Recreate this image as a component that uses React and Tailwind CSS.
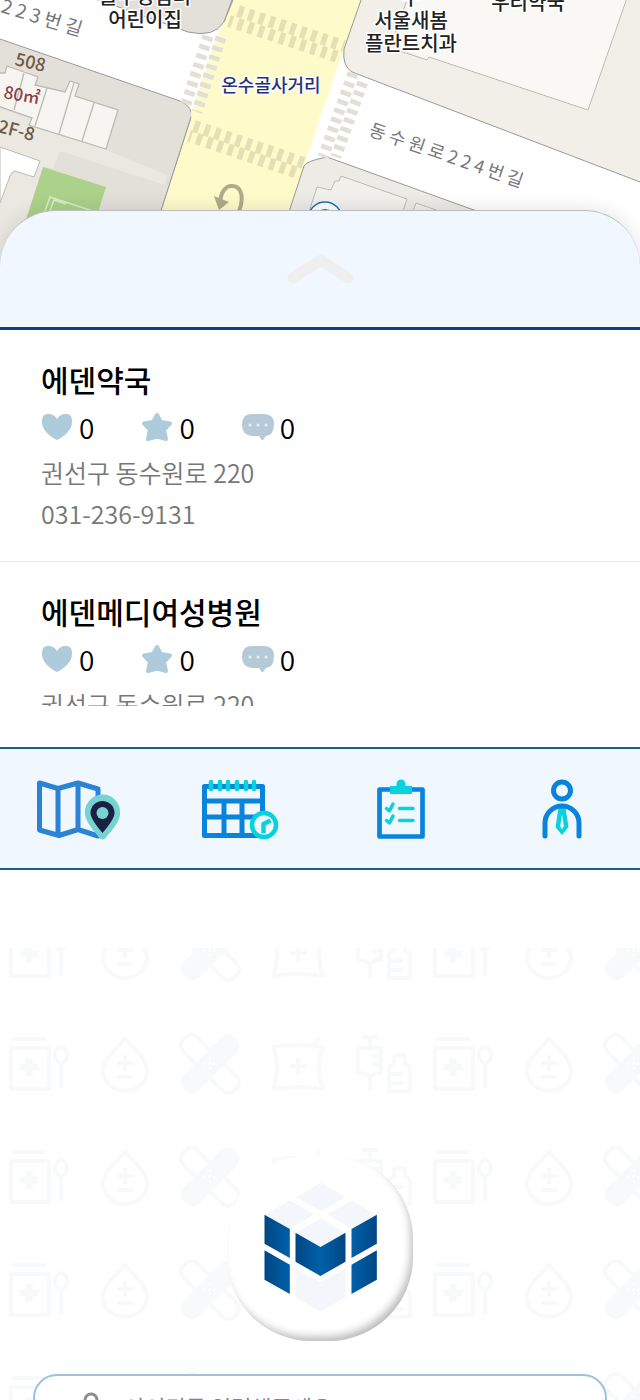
import React from "react";

function MapView() {
  const halo = { paintOrder: "stroke", stroke: "#ffffff", strokeWidth: 3, strokeLinejoin: "round" };
  return (
    <svg
      className="block h-[270px] w-full"
      viewBox="0 0 640 270"
      preserveAspectRatio="xMidYMin slice"
      role="img"
      aria-label="지도"
      fontFamily="'Noto Sans CJK KR', sans-serif"
    >
      <rect width="640" height="270" fill="#ffffff" />
      {/* western block */}
      <path d="M0 39 L180 101 Q194 107 191 119 L142 270 H0Z" fill="#e3e0d9" />
      <path d="M0 108 L46 125 L167 175 L165 185 L60 151 L53 168 L43 167 L27 215 L0 270Z" fill="#ebe8e1" />
      <path d="M0 39 L180 101 Q194 107 191 119 L142 270" fill="none" stroke="#999999" />
      <path d="M0 147 L40 161 L34 177 L15 171 Q11 172 10 176 L0 203Z" fill="#ffffff" stroke="#bdbab2" />
      <path d="M43 167 L106 187 L80 270 H10Z" fill="#acd18a" />
      <path d="M24 270 L50 197 L105 215 M28 270 L54 200 L66 204" fill="none" stroke="#d8ebc5" strokeWidth="1.5" />
      <path
        d="M-2 73 L5 73 L7 66 L24 72 L38 77 L35 85 L65 92 L70 81 L79 84 L75 96 L118 110 L106 149 L29 125 L32 118 L-2 106Z"
        fill="#f6f5f2"
        stroke="#bdbab2"
        strokeWidth="1.3"
      />
      <path d="M24 73 L14 110 M47 88 L35 126 M74 83 L59 134 M94 103 L82 141" stroke="#bdbab2" strokeWidth="1.3" />
      {/* kindergarten block */}
      <path d="M95 0 L118 7 L188 32 Q214 38 224 22 L233 0Z" fill="#e3e0d9" />
      <path d="M113 5 L188 32 Q214 38 224 22 L232 0" fill="none" stroke="#999999" />
      {/* main road */}
      <path d="M233 0 H361 L343 52 L320 117 L270 270 H142 L191 119 V113 L218 34 L224 22Z" fill="#fffaca" />
      <path d="M233 0 L224 22 M191 117 L142 270" stroke="#999999" />
      <g fill="none" stroke="#e5dfb6" strokeWidth="12" strokeDasharray="5.5 5.5">
        <path d="M238 11 L344 46" />
        <path d="M229 21 L338 57" strokeDashoffset="2" />
        <path d="M194 126 L304 163" />
        <path d="M189 136 L301 174" strokeDashoffset="3" />
      </g>
      {/* eastern block */}
      <path d="M361 0 L344 49 Q342 66 352 72 L640 182 V0Z" fill="#f2efe8" />
      <path d="M361 0 L344 49 Q342 66 352 72 L640 182" fill="none" stroke="#999999" />
      <path d="M410 -10 L396 46 L427 60 L429 57 L588 110 L630 -10Z" fill="#f9f8f5" />
      <path d="M407 0 L395 34 M400 51 L427 60 L429 57 L588 110 L627 -2" fill="none" stroke="#bdbab2" />
      {/* southern block */}
      <path d="M270 270 L304 166 Q306 161 327 157 L640 270Z" fill="#edebe6" />
      <path d="M270 270 L304 166 Q306 161 327 157 L640 270" fill="none" stroke="#999999" />
      <path
        d="M300 240 L317 187 L331 190 L335 181 L339 181 L341 176 L407 199 L397 230Z M408 225 L416 203 L470 222"
        fill="#f2f0ec"
        stroke="#bdbab2"
      />
      <g fill="none" stroke="#e2dfd6" strokeWidth="11" strokeDasharray="4.8 4.8">
        <path d="M208 36 L186 104" />
        <path d="M222 34 L197 112" strokeDashoffset="6" />
        <path d="M353 73 L323 157" />
        <path d="M364 79 L336 157" strokeDashoffset="6" />
      </g>
      <path d="M238 214 C244 200 243 187 233 186 C225 185 221 193 220 202" fill="none" stroke="#b0ab8b" strokeWidth="4" />
      <path d="M214 196 L229 202 L219 210Z" fill="#b0ab8b" />
      <circle cx="325" cy="219" r="17" fill="#ffffff" stroke="#1973b3" strokeWidth="1.5" />
      <circle cx="325" cy="219" r="10" fill="#1973b3" />
      <g fontSize="18" fontWeight="500" fill="#222222" textAnchor="middle">
        <text fontSize="20" style={halo}>
          <tspan x="145" y="4">을수정림터</tspan>
          <tspan x="145" y="27">어린이집</tspan>
        </text>
        <text fontSize="20" style={halo}>
          <tspan x="411" y="5">수</tspan>
          <tspan x="411" y="28">서울새봄</tspan>
          <tspan x="411" y="51">플란트치과</tspan>
        </text>
        <text x="528" y="10" fontSize="20" style={halo}>우리약국</text>
        <text x="271" y="92" fill="#26317e" style={halo}>온수골사거리</text>
      </g>
      <g fontSize="18" fill="#77777a">
        <text transform="translate(0 12) rotate(17)" fontSize="19">2 2 3 번 길</text>
        <text transform="translate(368 135) rotate(19)">동 수 원 로 2 2 4 번 길</text>
      </g>
      <g fill="#6e5a48" fontWeight="500">
        <text transform="translate(14 65) rotate(13)" fontSize="18">508</text>
        <text transform="translate(-3 132) rotate(14)" fontSize="18">2F-8</text>
        <text transform="translate(3 98) rotate(10)" fontSize="17" fill="#8a3f45">80㎡</text>
      </g>
    </svg>
  );
}

const HeartIcon = () => (
  <svg className="h-8 w-8" viewBox="0 0 32 32" aria-hidden="true">
    <path d="M16 29 C10 26 1 20 1 11 C1 5 3 3 7 3 C12 3 14 5 16 8 C18 5 20 3 25 3 C29 3 31 5 31 11 C31 20 22 26 16 29Z" fill="#aecbdb" />
  </svg>
);

const StarIcon = () => (
  <svg className="h-8 w-8" viewBox="0 0 32 32" aria-hidden="true">
    <path
      d="M16 4 L20 11 L29 12.500 L23 19 L25 28 L16 25.500 L7 28 L9 19 L3 12.500 L12 11Z"
      fill="#aecbdb"
      stroke="#aecbdb"
      strokeWidth="4"
      strokeLinejoin="round"
    />
  </svg>
);

const CommentIcon = () => (
  <svg className="h-8 w-8" viewBox="0 0 32 32" aria-hidden="true">
    <path d="M10 3 H22 Q32 3 32 13 Q32 24 24 25 L21 29 Q20 30 19 28 L17 25 H10 Q0 24 0 14 Q0 3 10 3Z" fill="#b5cad6" />
    <g fill="#e6f1f6">
      <circle cx="8" cy="14" r="1.500" />
      <circle cx="16" cy="14" r="1.500" />
      <circle cx="24" cy="14" r="1.500" />
    </g>
  </svg>
);

function Stat({ label, icon, value }) {
  return (
    <li className="flex items-center gap-1.5" aria-label={label}>
      {icon}
      <span className="text-[28px] leading-[50px] font-[350]">{value}</span>
    </li>
  );
}

function Place({ name, address, phone }) {
  return (
    <li className="border-b border-[#e8e8e8] px-[41px] pt-[27px] pb-[27px]">
      <h2 className="text-[30px] leading-[45px] font-medium">{name}</h2>
      <ul className="flex gap-[47px]">
        <Stat label="좋아요" icon={<HeartIcon />} value={0} />
        <Stat label="별점" icon={<StarIcon />} value={0} />
        <Stat label="댓글" icon={<CommentIcon />} value={0} />
      </ul>
      <p className="text-[25px] leading-[41px] font-[350] text-[#777777]">{address}</p>
      <p className="text-[25px] leading-[41px] font-[350] text-[#777777]">{phone}</p>
    </li>
  );
}

const MapIcon = () => (
  <svg className="h-[64px] w-[84px]" viewBox="4 0 84 64" aria-hidden="true">
    <path
      d="M6.500 5 L25 10.500 L45 5 L65 11 V58 L45 51.500 L26 57.500 L6.500 52Z M25 10.500 V57 M45 5 V52"
      fill="none"
      stroke="#2b83d6"
      strokeWidth="5"
      strokeLinejoin="round"
    />
    <path d="M69.500 61.500 Q67 61.500 65 58 Q51 42 52 34 A17.500 17.500 0 0 1 87 34 Q88 43 74 58 Q72 61.500 69.500 61.500Z" fill="#77d2d2" />
    <path d="M69.500 55 Q57.500 41 57.500 35 A12 12 0 0 1 81.500 35 Q81.500 41 69.500 55Z" fill="#1b2142" />
    <circle cx="69.500" cy="35" r="6" fill="#77d2d2" />
  </svg>
);

const CalendarIcon = () => (
  <svg className="h-[64px] w-[78px]" viewBox="0 0 78 64" aria-hidden="true">
    <path
      d="M3.500 8.500 H61.500 V57.500 H3.500Z M3.500 23 H61 M3.500 39 H61 M23 23 V57 M41 23 V57"
      fill="none"
      stroke="#0984dc"
      strokeWidth="5"
      strokeLinejoin="round"
    />
    <path d="M10 4 V11 M19 4 V11 M27 4 V11 M36 4 V11 M45 4 V11 M53 4 V11" stroke="#08d2dc" strokeWidth="4.500" strokeLinecap="round" />
    <circle cx="63" cy="47" r="12" fill="#f0f7ff" stroke="#08d2dc" strokeWidth="4.500" />
    <path d="M62.500 53 V46 L67.500 43.500" fill="none" stroke="#08d2dc" strokeWidth="4.500" strokeLinecap="square" strokeLinejoin="round" />
  </svg>
);

const ChecklistIcon = () => (
  <svg className="h-[64px] w-[50px]" viewBox="0 0 50 64" aria-hidden="true">
    <rect x="3.500" y="11.500" width="43" height="47" fill="none" stroke="#0984dc" strokeWidth="4.700" strokeLinejoin="round" />
    <path d="M14 8 H20.500 V6 A4.500 4.500 0 0 1 29.500 6 V8 H36 V16 H14Z" fill="#08d2dc" />
    <path
      d="M10.500 30.500 L13.500 33 L17 26 M10.500 42.500 L13.500 45 L17 38 M23.500 30.500 H37 M23.500 42.500 H37"
      fill="none"
      stroke="#08d2dc"
      strokeWidth="3.500"
      strokeLinecap="round"
      strokeLinejoin="round"
    />
  </svg>
);

const ProfileIcon = () => (
  <svg className="h-[64px] w-[42px]" viewBox="0 0 42 64" aria-hidden="true">
    <circle cx="21" cy="12.500" r="8.500" fill="none" stroke="#0984dc" strokeWidth="5" />
    <path d="M17.500 30 H24.500 L27.500 49 L21 57 L14.500 49Z" fill="#08d2dc" />
    <path d="M21 36 L22.800 48 L21 51.500 L19.200 48Z" fill="#f0f7ff" />
    <path d="M4 58 V45 A17 17 0 0 1 38 45 V58" fill="none" stroke="#0984dc" strokeWidth="5" strokeLinecap="round" />
  </svg>
);

const tabs = [
  { label: "지도", Icon: MapIcon },
  { label: "일정", Icon: CalendarIcon },
  { label: "체크리스트", Icon: ChecklistIcon },
  { label: "내 정보", Icon: ProfileIcon },
];

function MedicalPattern() {
  return (
    <svg className="absolute inset-0 h-full w-full" aria-hidden="true">
      <defs>
        <pattern id="medical" width="424" height="113" y="81" patternUnits="userSpaceOnUse">
          <g fill="none" stroke="#f7f9fb" strokeWidth="4" strokeLinejoin="round">
            <path d="M12 10 H46 M11 19 H49 V60 H11Z M61 35 V59" />
            <path d="M29 29 V47 M20 38 H38" strokeWidth="7" />
            <ellipse cx="61" cy="26" rx="6" ry="8" />
            <path d="M125 9 C118 20 103 28 103 42 A22 20 0 0 0 147 42 C147 28 132 20 125 9Z M125 26 V42 M117 34 H133 M117 48 H133" />
            <rect x="174" y="25" width="72" height="20" rx="8" transform="rotate(45 210 35)" />
            <path d="M273 18 Q298 14 323 18 Q315 38 323 60 Q298 56 273 60 Q281 38 273 18Z M298 28 V46 M289 37 H307 M314 16 L320 9" />
            <path d="M358 19 H381 V44 H376 L370 48 L363 44 H358Z M370 48 V62 M370 19 V8 M362 8 H378 M372 27 H380 M372 35 H380" />
            <path d="M394 26 H405 M394 26 V34 L389 38 V62 H410 V38 L405 34 V26 M389 45 H403 M389 54 H403" />
          </g>
          <rect x="174" y="24" width="72" height="22" rx="9" transform="rotate(-45 210 35)" fill="#f7f9fb" />
          <path d="M203 35 H217 M210 28 V42" stroke="#ffffff" strokeWidth="2" strokeDasharray="2 3" />
        </pattern>
      </defs>
      <rect width="100%" height="100%" fill="url(#medical)" />
    </svg>
  );
}

function Logo() {
  return (
    <svg className="h-full w-full" viewBox="84 75 555 558" role="img" aria-label="로고">
      <defs>
        <linearGradient id="side">
          <stop offset="0" stopColor="#004783" />
          <stop offset="1" stopColor="#0060aa" />
        </linearGradient>
        <linearGradient id="sideFlip">
          <stop offset="0" stopColor="#0060aa" />
          <stop offset="1" stopColor="#004783" />
        </linearGradient>
        <linearGradient id="front">
          <stop offset="0" stopColor="#004783" />
          <stop offset="0.5" stopColor="#0060aa" />
          <stop offset="1" stopColor="#004783" />
        </linearGradient>
      </defs>
      <g fill="#f3f7fb">
        <path d="M364 158 L438 201 L364 244 L290 201Z" />
        <path d="M270 211 L344 253 L270 298 L197 255Z" />
        <path d="M457 211 L530 254 L457 296 L383 253Z" />
        <path d="M363 265 L437 308 L363 351 L289 308Z" />
        <path d="M288 416 L363 457 L438 416 V502 L363 545 L288 502Z" />
      </g>
      <path d="M195 254 L271 297 V384 L195 341Z M195 361 L271 404 V492 L195 449Z" fill="url(#side)" />
      <path d="M532 254 L456 297 V384 L532 341Z M532 361 L456 404 V492 L532 449Z" fill="url(#sideFlip)" />
      <path d="M288 308 L363 351 L438 308 V395 L363 438 L288 395Z" fill="url(#front)" />
    </svg>
  );
}

export default function App() {
  return (
    <main className="flex h-screen flex-col overflow-hidden bg-white font-['Noto_Sans_CJK_KR',sans-serif] text-black">
      <section className="shrink-0">
        <MapView />
        <div className="relative -mt-[60px] flex h-[120px] items-center justify-center rounded-t-[56px] border-t border-b-3 border-t-[#bcbcbc] border-b-[#00478a] bg-[#f0f7ff] shadow-[0_0_20px_rgba(0,0,0,0.12)]">
          <button type="button" aria-label="목록 펼치기">
            <svg className="h-[34px] w-[68px]" viewBox="0 0 68 34" aria-hidden="true">
              <path d="M7 26 L35 8 L62 26" fill="none" stroke="#efefef" strokeWidth="11" strokeLinecap="round" strokeLinejoin="round" />
            </svg>
          </button>
        </div>
        <ul className="relative h-[376px] overflow-hidden bg-white">
          <Place name="에덴약국" address="권선구 동수원로 220" phone="031-236-9131" />
          <Place name="에덴메디여성병원" address="권선구 동수원로 220" phone="031-236-9131" />
        </ul>
      </section>

      <nav className="-mx-0.5 mt-[41px] grid shrink-0 grid-cols-4 border-y-2 border-[#165f98] bg-[#f0f7ff]">
        {tabs.map(({ label, Icon }) => (
          <button key={label} type="button" aria-label={label} className="flex h-[119px] items-center justify-center pt-0.5">
            <Icon />
          </button>
        ))}
      </nav>

      <section className="relative mt-[78px] min-h-0 flex-1 overflow-hidden">
        <MedicalPattern />
        <form className="relative flex flex-col items-center px-[33px] pt-[207px]">
          <div className="h-[186px] w-[186px] rounded-[84px] bg-white shadow-[inset_-4px_-6px_8px_-2px_rgba(0,0,0,0.28)]">
            <Logo />
          </div>
          <label className="mt-[33px] flex h-16 w-full items-center gap-6 rounded-[24px] border-2 border-[#9cc2de] bg-white pl-[46px]">
            <svg className="h-7 w-5 shrink-0" viewBox="0 0 20 28" fill="none" stroke="#8c8c8c" strokeWidth="3" aria-hidden="true">
              <circle cx="10" cy="8" r="6" />
              <path d="M2 27 V24 Q2 18 10 18 Q18 18 18 24 V27" />
            </svg>
            <input
              type="text"
              aria-label="아이디"
              placeholder="아이디를 입력해주세요"
              className="h-full min-w-0 flex-1 bg-transparent text-[22px] outline-none placeholder:text-[#858585]"
            />
          </label>
        </form>
      </section>
    </main>
  );
}
